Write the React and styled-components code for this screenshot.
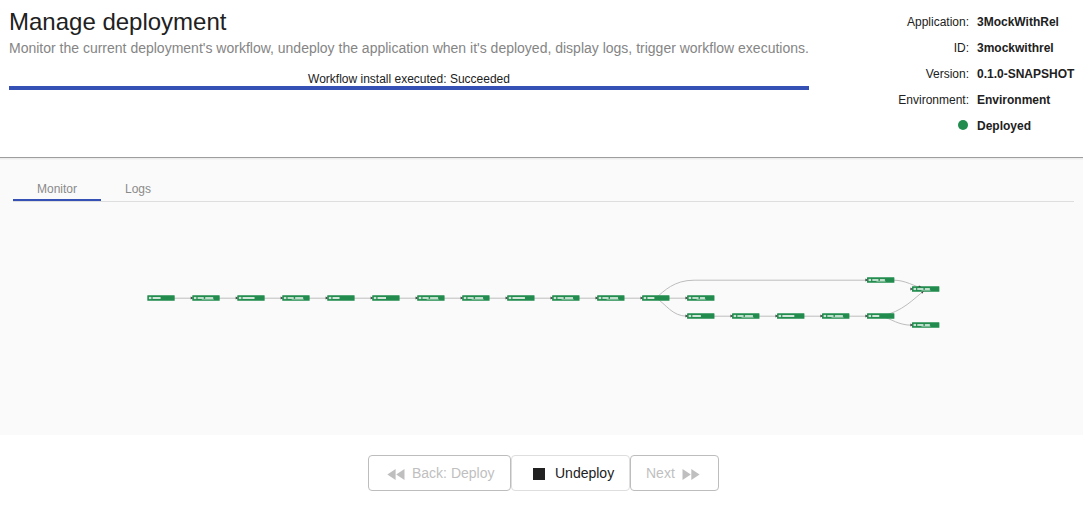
import React from 'react';
import styled, { createGlobalStyle } from 'styled-components';

const GlobalStyle = createGlobalStyle`
  * { box-sizing: border-box; }
  body {
    margin: 0;
    background: #fff;
    color: #212121;
    font-family: "Liberation Sans", Arial, sans-serif;
    font-size: 12px;
  }
`;

const Page = styled.div`
  height: 506px;
  display: flex;
  flex-direction: column;
  overflow: hidden;
`;

const Header = styled.header`
  height: 157px;
  flex: none;
  display: flex;
  justify-content: space-between;
  padding: 9px 9px 0;
`;

const Intro = styled.div`
  width: 800px;
`;

const Title = styled.h1`
  margin: 0;
  font-size: 24px;
  line-height: 26px;
  font-weight: 400;
`;

const Subtitle = styled.p`
  margin: 4px 0 0;
  font-size: 14px;
  line-height: 18px;
  color: #858585;
  white-space: nowrap;
`;

const Status = styled.div`
  margin-top: 15px;
  line-height: 14px;
  text-align: center;
`;

const Progress = styled.div`
  height: 4px;
  background: #3551b5;
`;

const Details = styled.dl`
  display: grid;
  grid-template-columns: auto 97px;
  grid-auto-rows: 26px;
  column-gap: 8px;
  align-items: center;
  justify-items: end;
  margin: 0;
`;

const Label = styled.dt``;

const Value = styled.dd`
  margin: 0;
  justify-self: start;
  font-weight: 700;
  white-space: nowrap;
`;

const Dot = styled.span`
  display: block;
  width: 10px;
  height: 10px;
  margin: -2px 1px 0 0;
  border-radius: 50%;
  background: #218c4d;
`;

const Main = styled.main`
  flex: none;
  height: 278px;
  padding: 20px 9px 0 13px;
  background: linear-gradient(#ececec 1px, #fafafa 2px);
  border-top: 1px solid #9e9e9e;
`;

const Tabs = styled.nav`
  display: flex;
  height: 24px;
  border-bottom: 1px solid #dedede;
`;

const Tab = styled.div`
  height: 23px;
  padding: 4px 24px 0;
  line-height: 14px;
  color: #8a8a8a;
  border-bottom: 2px solid ${(p) => (p.$active ? '#3551b5' : 'transparent')};
`;

const Graph = styled.svg`
  display: block;
  width: 1061px;
  height: 232px;
`;

const Footer = styled.footer`
  display: flex;
  justify-content: center;
  padding: 20px 0 0 4px;
`;

const Button = styled.button`
  display: flex;
  align-items: center;
  width: ${(p) => p.$width}px;
  height: 36px;
  padding: 0 0 0 ${(p) => p.$inset}px;
  gap: ${(p) => p.$gap}px;
  border: 1px solid ${(p) => (p.$muted ? '#bdbdbd' : '#dedede')};
  border-radius: 4px;
  background: #fff;
  color: ${(p) => (p.$muted ? '#bfbfbf' : '#212121')};
  font: 14px "Liberation Sans", Arial, sans-serif;
  white-space: nowrap;
`;

const Icon = styled.svg`
  display: block;
  flex: none;
  margin-top: ${(p) => p.$drop}px;
  fill: currentColor;
`;

const details = [
  ['Application:', '3MockWithRel'],
  ['ID:', '3mockwithrel'],
  ['Version:', '0.1.0-SNAPSHOT'],
  ['Environment:', 'Environment'],
  [null, 'Deployed'],
];

const TOP = 277.3;
const UPPER = 286.3;
const MID = 295.3;
const LOW = 313.3;
const BOTTOM = 322.3;

// [column, y, caption width, whether the caption has underscores]
const steps = [
  [0, MID, 8], [1, MID, 18, true], [2, MID, 12], [3, MID, 18, true],
  [4, MID, 7], [5, MID, 8.5], [6, MID, 18, true], [7, MID, 18, true],
  [8, MID, 12.5], [9, MID, 18, true], [10, MID, 18, true], [11, MID, 7],
  [12, MID, 15, true], [12, LOW, 8.5], [13, LOW, 18, true], [14, LOW, 12],
  [15, LOW, 18, true], [16, LOW, 7], [16, TOP, 15, true],
  [17, UPPER, 15, true], [17, BOTTOM, 15, true],
];

function Step({ col, y, caption, long }) {
  const x = 147.3 + col * 44.98;
  return (
    <g>
      {col > 0 && <path d={`M${x - 1.6} ${y + 1.3}L${x + 1} ${y + 2.8}L${x - 1.6} ${y + 4.3}z`} fill="#444" />}
      <rect x={x} y={y} width="27.4" height="5.5" rx=".4" fill="#218c4d" />
      <rect x={x + 1.6} y={y + 1.6} width="2.5" height="2.2" fill="#c9e4d4" />
      <path
        d={long
          ? `M${x + 5.3} ${y + 2.7}h6.2m1.4 0h${caption - 10}`
          : `M${x + 5.3} ${y + 2.7}h${caption}`}
        stroke="#fff"
        strokeWidth="1.7"
        opacity=".92"
      />
      {long && <path d={`M${x + 9.5} ${y + 4}h${caption - 6}`} stroke="#fff" strokeWidth=".8" opacity=".6" />}
    </g>
  );
}

function Workflow() {
  return (
    <Graph viewBox="13 202 1061 232">
      <g fill="none" stroke="#bdbdbd" strokeWidth="1">
        <path d="M174 298.2H687" />
        <path d="M656 298C664 291 674 280.2 694 280.2H867" />
        <path d="M656 298C666 304 672 316.2 687 316.2" />
        <path d="M687 316.2H867" />
        <path d="M894 280.2C905 280.2 914 286 924 289" />
        <path d="M881 316C903 312 914 298 924 291" />
        <path d="M881 316C892 319 898 325.2 912 325.2" />
      </g>
      {steps.map(([col, y, caption, long]) => (
        <Step key={`${col}-${y}`} col={col} y={y} caption={caption} long={long} />
      ))}
      <path d="M919 285.6l2.4 1.2-3 .2zM921 292.8l2.4-1.8-.6 2.6z" fill="#444" />
    </Graph>
  );
}

export default function App() {
  return (
    <Page>
      <GlobalStyle />
      <Header>
        <Intro>
          <Title>Manage deployment</Title>
          <Subtitle>
            Monitor the current deployment's workflow, undeploy the application when it's deployed, display logs, trigger workflow executions.
          </Subtitle>
          <Status>Workflow install executed: Succeeded</Status>
          <Progress />
        </Intro>
        <Details>
          {details.map(([label, value]) => (
            <React.Fragment key={value}>
              <Label>{label || <Dot />}</Label>
              <Value>{value}</Value>
            </React.Fragment>
          ))}
        </Details>
      </Header>
      <Main>
        <Tabs>
          <Tab $active>Monitor</Tab>
          <Tab>Logs</Tab>
        </Tabs>
        <Workflow />
      </Main>
      <Footer>
        <Button $width={143} $inset={18} $gap={7} $muted>
          <Icon $drop={2} width="18" height="11" viewBox="0 0 18 11"><path d="M8.6 0v11L.3 5.5zM17.5 0v11L9.2 5.5z" /></Icon>
          Back: Deploy
        </Button>
        <Button $width={119} $inset={21} $gap={10}>
          <Icon $drop={2} width="12" height="12" viewBox="0 0 12 12"><path d="M0 0h12v12H0z" /></Icon>
          Undeploy
        </Button>
        <Button $width={89} $inset={15} $gap={7} $muted>
          Next
          <Icon $drop={2} width="18" height="11" viewBox="0 0 18 11"><path d="M.5 0v11l8.3-5.5zM9.3 0v11l8.3-5.5z" /></Icon>
        </Button>
      </Footer>
    </Page>
  );
}
